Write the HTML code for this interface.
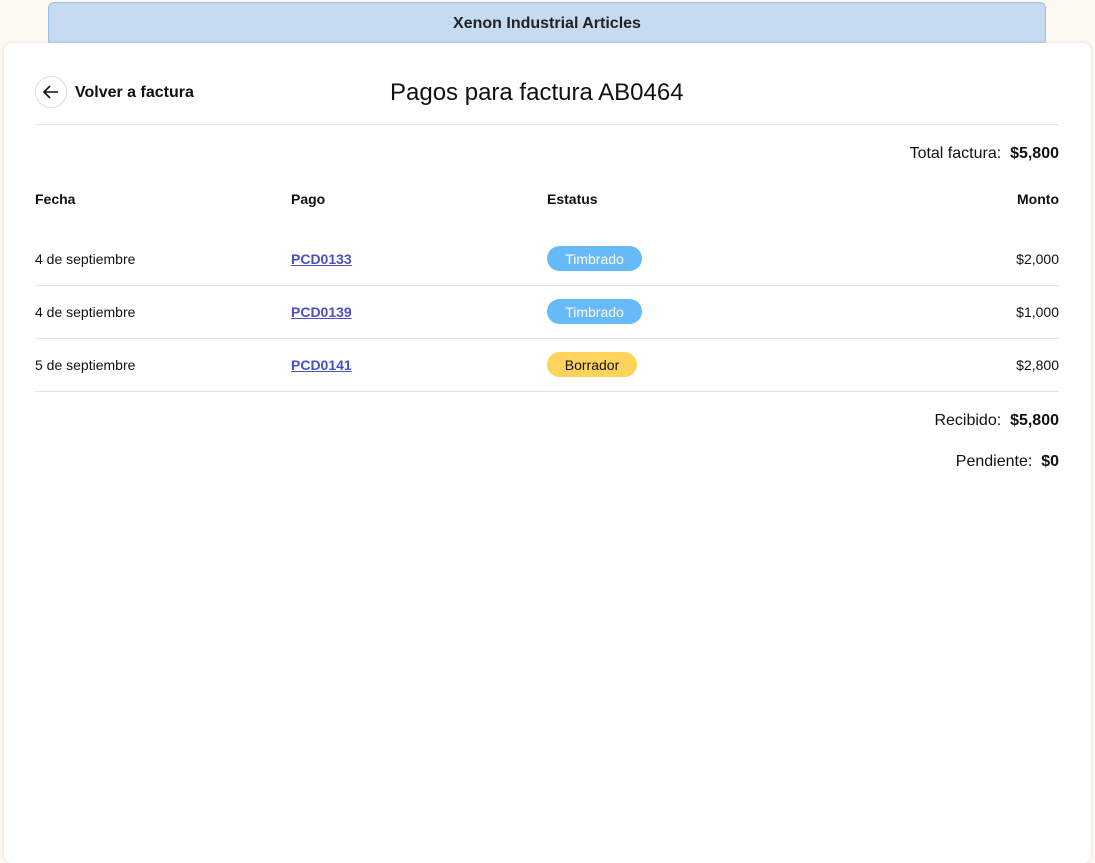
<!DOCTYPE html>
<html><head><meta charset="utf-8"><style>
body{margin:0;width:1095px;height:840px;overflow:hidden;background:#fdf8f2;font-family:"Liberation Sans",sans-serif;color:#111;position:relative}
.top{position:absolute;left:48px;top:2px;width:998px;height:44px;background:#c6dbf1;border:1px solid #9dbfe3;border-radius:6px;text-align:center;font-size:16px;font-weight:bold;line-height:42px;color:#222;box-sizing:border-box}
.card{position:absolute;left:4px;top:43px;width:1087px;height:820px;background:#fff;border-radius:8px;box-shadow:0 0 3px rgba(0,0,0,.15)}
.a{position:absolute}
.back{left:31px;top:33px;width:30px;height:30px;border:1px solid #ddd;border-radius:50%}
.hr{position:absolute;left:31px;width:1024px;height:1px;background:#e3e3e3}
.pill{position:absolute;height:25px;border-radius:13px;font-size:14px;line-height:26px;text-align:center}
.lnk{color:#4a4fc4;text-decoration:underline;font-weight:bold;font-size:14px}
</style></head><body>
<div class="top">Xenon Industrial Articles</div>
<div class="card">
<div class="a back"><svg width="30" height="30"><path d="M8 15h14M14 9l-6 6 6 6" stroke="#111" stroke-width="1.6" fill="none"/></svg></div>
<div class="a" style="left:71px;top:41px;font-size:16px;font-weight:bold">Volver a factura</div>
<div class="a" style="left:386px;top:36px;font-size:24px">Pagos para factura AB0464</div>
<div class="hr" style="top:81px"></div>
<div class="a" style="right:32px;top:102px;font-size:16px">Total factura:&nbsp; <b>$5,800</b></div>
<div class="a" style="left:31px;top:148px;font-size:14px;font-weight:bold">Fecha</div>
<div class="a" style="left:287px;top:148px;font-size:14px;font-weight:bold">Pago</div>
<div class="a" style="left:543px;top:148px;font-size:14px;font-weight:bold">Estatus</div>
<div class="a" style="right:32px;top:148px;font-size:14px;font-weight:bold">Monto</div>
<div class="a" style="left:31px;top:208px;font-size:14px">4 de septiembre</div>
<div class="a lnk" style="left:287px;top:208px">PCD0133</div>
<div class="pill" style="left:543px;top:203px;width:95px;background:#67b9f7;color:#fff">Timbrado</div>
<div class="a" style="right:32px;top:208px;font-size:14px">$2,000</div>
<div class="hr" style="top:242px"></div>
<div class="a" style="left:31px;top:261px;font-size:14px">4 de septiembre</div>
<div class="a lnk" style="left:287px;top:261px">PCD0139</div>
<div class="pill" style="left:543px;top:256px;width:95px;background:#67b9f7;color:#fff">Timbrado</div>
<div class="a" style="right:32px;top:261px;font-size:14px">$1,000</div>
<div class="hr" style="top:295px"></div>
<div class="a" style="left:31px;top:314px;font-size:14px">5 de septiembre</div>
<div class="a lnk" style="left:287px;top:314px">PCD0141</div>
<div class="pill" style="left:543px;top:309px;width:90px;background:#fdd35c;color:#111">Borrador</div>
<div class="a" style="right:32px;top:314px;font-size:14px">$2,800</div>
<div class="hr" style="top:348px"></div>
<div class="a" style="right:32px;top:369px;font-size:16px">Recibido:&nbsp; <b>$5,800</b></div>
<div class="a" style="right:32px;top:410px;font-size:16px">Pendiente:&nbsp; <b>$0</b></div>
</div>
</body></html>
